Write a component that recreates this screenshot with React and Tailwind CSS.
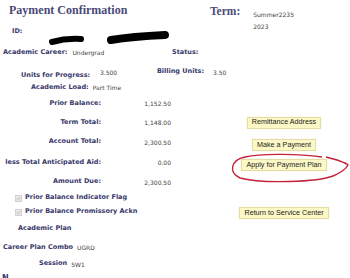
import React from "react";

const L = "font-bold text-[#38386a] text-[6.5px] whitespace-nowrap";
const V = "text-[#444] text-[6px] whitespace-nowrap";

function Btn({ children, className = "" }) {
  return (
    <span
      className={
        "inline-flex items-center h-[12px] px-[4px] bg-[#fcf8c6] border border-[#e3dca6] text-[#222] text-[7.2px] font-['Liberation_Sans',Arial,sans-serif] whitespace-nowrap shadow-[0_0_1px_#eee9b8] " +
        className
      }
    >
      {children}
    </span>
  );
}

function MoneyRow({ label, value, h, btn, btnClass }) {
  return (
    <div className={"flex items-center " + h}>
      <div className={"w-[101px] text-right " + L}>{label}</div>
      <div className={"w-[70px] text-right " + V}>{value}</div>
      <div className="ml-[63px] w-[100px] flex justify-center">
        {btn ? <Btn className={btnClass}>{btn}</Btn> : null}
      </div>
    </div>
  );
}

function Check({ label, h, btn, btnClass }) {
  return (
    <div className={"flex items-center " + h}>
      <div className="w-[234px] flex items-center pl-[15px]">
        <span className="w-[7px] h-[7px] bg-[#e6e6e6] border border-[#d2d2d2] flex items-center justify-center">
          <svg width="5" height="5" viewBox="0 0 5 5">
            <path d="M0.8 2.6 L2 3.8 L4.3 1" stroke="#b9b9b9" strokeWidth="0.9" fill="none" />
          </svg>
        </span>
        <span className={"ml-[3px] " + L}>{label}</span>
      </div>
      <div className="w-[100px] flex justify-center">
        {btn ? <Btn className={btnClass}>{btn}</Btn> : null}
      </div>
    </div>
  );
}

export default function App() {
  return (
    <div className="relative w-[350px] h-[278px] overflow-hidden bg-white font-['DejaVu_Sans',Verdana,sans-serif]">
      {/* header */}
      <div className="flex h-[43px]">
        <div className="w-[210px]">
          <div className="h-[21px] pl-[9px] pt-[3px] font-['Liberation_Serif',serif] font-bold text-[12px] leading-[15px] text-[#4a4a78]">
            Payment Confirmation
          </div>
          <div className="h-[22px] pl-[12px] flex items-center">
            <span className={L}>ID:</span>
          </div>
        </div>
        <div className="pt-[4px] font-['Liberation_Serif',serif] font-bold text-[11.5px] leading-[14px] text-[#4a4a78]">
          Term:
        </div>
        <div className={"ml-[13px] pt-[9px] flex flex-col leading-[12px] " + V}>
          <span>Summer2235</span>
          <span>2023</span>
        </div>
      </div>

      {/* career / status */}
      <div className="flex items-center h-[20px]">
        <div className="w-[172px] flex pl-[3px]">
          <span className={L}>Academic Career:</span>
          <span className={"ml-[5px] " + V}>Undergrad</span>
        </div>
        <span className={L}>Status:</span>
      </div>

      {/* units */}
      <div className="flex items-center h-[18px]">
        <div className="w-[100px] pl-[21px]">
          <span className={L}>Units for Progress:</span>
        </div>
        <div className={"w-[40px] " + V}>3.500</div>
        <div className={"w-[64px] text-right " + L}>Billing Units:</div>
        <div className={"ml-[9px] " + V}>3.50</div>
      </div>

      {/* load */}
      <div className="flex items-center h-[13px] pl-[31px]">
        <span className={L}>Academic Load:</span>
        <span className={"ml-[4px] " + V}>Part Time</span>
      </div>

      <MoneyRow h="h-[19px]" label="Prior Balance:" value="1,152.50" />
      <MoneyRow h="h-[19px]" label="Term Total:" value="1,148.00" btn="Remittance Address" />
      <MoneyRow h="h-[20px]" label="Account Total:" value="2,300.50" btn="Make a Payment" btnClass="mt-[6px]" />
      <MoneyRow h="h-[21px]" label="less Total Anticipated Aid:" value="0.00" btn="Apply for Payment Plan" btnClass="mt-[5px]" />
      <MoneyRow h="h-[18px]" label="Amount Due:" value="2,300.50" />

      <Check h="h-[14px]" label="Prior Balance Indicator Flag" />
      <Check h="h-[14px]" label="Prior Balance Promissory Ackn" btn="Return to Service Center" btnClass="mt-[2px]" />

      <div className="flex items-center h-[20px] pl-[18px]">
        <span className={L}>Academic Plan</span>
      </div>
      <div className="flex items-center h-[17px] pl-[3px]">
        <span className={L}>Career Plan Combo</span>
        <span className={"ml-[4px] " + V}>UGRD</span>
      </div>
      <div className="flex items-center h-[16px] pl-[39px]">
        <span className={L}>Session</span>
        <span className={"ml-[4px] " + V}>5W1</span>
      </div>
      <div className="flex items-start h-[16px] pl-[2px] pt-[2px]">
        <span className="font-bold text-[#38386a] text-[8px] leading-[10px]">N</span>
      </div>

      {/* annotations drawn over the screenshot */}
      <svg className="absolute left-0 top-0 pointer-events-none" width="350" height="278" viewBox="0 0 350 278">
        <path d="M52 42 Q 66 38 81 39" stroke="#000" strokeWidth="6" strokeLinecap="round" fill="none" />
        <path d="M111 40 Q 132 36.5 165 35" stroke="#000" strokeWidth="8" strokeLinecap="round" fill="none" />
        <path
          d="M322 157 C 300 154, 262 153, 245 157 C 231 160, 228 172, 240 178 C 262 184, 318 182, 333 176 C 340 173, 346 169, 348 165 C 345 162, 338 160, 326 157"
          stroke="#c4223a"
          strokeWidth="1.4"
          fill="none"
        />
      </svg>
    </div>
  );
}
